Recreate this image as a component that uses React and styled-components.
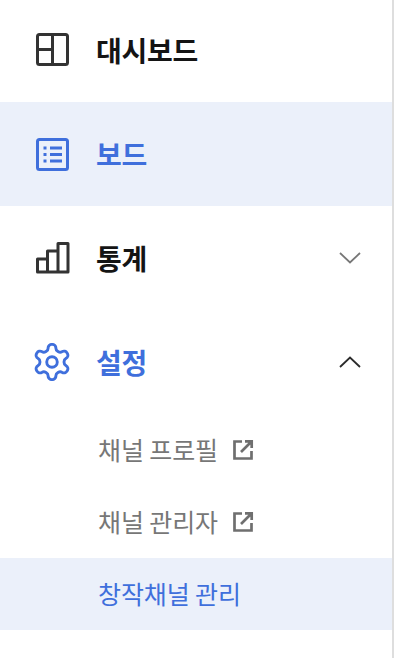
import React from 'react'
import styled, { createGlobalStyle } from 'styled-components';

const GlobalStyle = createGlobalStyle`
  html, body {
    margin: 0;
    padding: 0;
    background: #fff;
    overflow: hidden;
  }
  body {
    font-family: "Noto Sans CJK KR", "Noto Sans", sans-serif;
  }
`;

const Sidebar = styled.nav`
  width: 392px;
  height: 658px;
  border-right: 2px solid #dedede;
  display: flex;
  flex-direction: column;
  background: #fff;
`;

const Menu = styled.a`
  flex: none;
  box-sizing: border-box;
  height: 104px;
  display: flex;
  align-items: center;
  padding: 0 31px 0 33px;
  gap: 25px;
  font-size: 28px;
  line-height: 36px;
  font-weight: 700;
  letter-spacing: -0.3px;
  color: ${p => (p.$active ? '#3f6fdc' : '#141414')};
  background: ${p => (p.$selected ? '#ebf0fa' : 'transparent')};
  &:first-child {
    height: 102px;
    padding-bottom: 2px;
  }
`;

const IconBox = styled.span`
  width: 38px;
  height: 38px;
  flex: none;
  display: flex;
  color: ${p => (p.$active ? '#3f6fdc' : '#333')};
`;

const Label = styled.span`
  flex: 1;
  margin-top: -1px;
`;

const Chevron = styled.svg`
  width: 22px;
  height: 12px;
  fill: none;
  stroke: ${p => (p.$open ? '#2b2b2b' : '#777')};
  stroke-width: 1.8;
`;

const SubMenu = styled.a`
  flex: none;
  box-sizing: border-box;
  height: 72px;
  display: flex;
  align-items: center;
  gap: 14px;
  padding: 0 0 3px 98px;
  font-size: 25px;
  line-height: 32px;
  letter-spacing: -0.1px;
  color: ${p => (p.$active ? '#3f6fdc' : '#777')};
  background: ${p => (p.$active ? '#ebf0fa' : 'transparent')};
`;

const External = styled.svg`
  width: 22px;
  height: 22px;
  flex: none;
  margin-top: 3px;
  fill: none;
  stroke: #6f6f6f;
  stroke-width: 2.7;
`;

const DashboardIcon = () => (
  <svg width="38" height="38" viewBox="0 0 38 38" fill="none" stroke="currentColor" strokeWidth="3">
    <rect x="4.5" y="3.5" width="30" height="30" rx="2" />
    <path d="M19.5 3.5V33.5M4.5 18.5H19.5" />
  </svg>
);

const BoardIcon = () => (
  <svg width="38" height="38" viewBox="0 0 38 38" fill="none" stroke="currentColor" strokeWidth="3">
    <rect x="4.5" y="4.5" width="30" height="30" rx="2" />
    <path d="M10.5 13H13.5M17 13H29M10.5 19.5H13.5M17 19.5H29M10.5 26H13.5M17 26H29" />
  </svg>
);

const StatsIcon = () => (
  <svg width="38" height="38" viewBox="0 0 38 38" fill="none" stroke="currentColor" strokeWidth="3" strokeLinejoin="round">
    <path d="M4.5 33V20H14.5V33ZM14.5 33V12H25V33ZM25 33V4.5H35V33ZM4.5 33H35" />
  </svg>
);

const GearIcon = () => (
  <svg width="38" height="38" viewBox="1.2 1.2 21.6 21.6" fill="none" stroke="currentColor" strokeWidth="1.65" strokeLinejoin="round">
    <path d="M12.22 2h-.44a2 2 0 0 0-2 2v.18a2 2 0 0 1-1 1.73l-.43.25a2 2 0 0 1-2 0l-.15-.08a2 2 0 0 0-2.73.73l-.22.38a2 2 0 0 0 .73 2.73l.15.1a2 2 0 0 1 1 1.72v.51a2 2 0 0 1-1 1.74l-.15.09a2 2 0 0 0-.73 2.73l.22.38a2 2 0 0 0 2.73.73l.15-.08a2 2 0 0 1 2 0l.43.25a2 2 0 0 1 1 1.73V20a2 2 0 0 0 2 2h.44a2 2 0 0 0 2-2v-.18a2 2 0 0 1 1-1.73l.43-.25a2 2 0 0 1 2 0l.15.08a2 2 0 0 0 2.73-.73l.22-.39a2 2 0 0 0-.73-2.73l-.15-.08a2 2 0 0 1-1-1.74v-.5a2 2 0 0 1 1-1.74l.15-.09a2 2 0 0 0 .73-2.73l-.22-.38a2 2 0 0 0-2.73-.73l-.15.08a2 2 0 0 1-2 0l-.43-.25a2 2 0 0 1-1-1.73V4a2 2 0 0 0-2-2z" />
    <circle cx="12" cy="12" r="3" />
  </svg>
);

const ExternalIcon = () => (
  <External viewBox="0 0 22 22">
    <path d="M10 2.5H2.5V19.5H19.5V12" />
    <path d="M9 13 19.5 2.5M13 2.3H19.7V9" />
  </External>
);

const App = () => {
  return (
    <>
      <GlobalStyle />
      <Sidebar>
        <Menu>
          <IconBox><DashboardIcon /></IconBox>
          <Label>대시보드</Label>
        </Menu>
        <Menu $active $selected>
          <IconBox $active><BoardIcon /></IconBox>
          <Label>보드</Label>
        </Menu>
        <Menu>
          <IconBox><StatsIcon /></IconBox>
          <Label>통계</Label>
          <Chevron viewBox="0 0 22 12"><path d="M1 1 11 10.5 21 1" /></Chevron>
        </Menu>
        <Menu $active>
          <IconBox $active><GearIcon /></IconBox>
          <Label>설정</Label>
          <Chevron $open viewBox="0 0 22 12"><path d="M1 11 11 1.5 21 11" /></Chevron>
        </Menu>
        <SubMenu>채널 프로필 <ExternalIcon /></SubMenu>
        <SubMenu>채널 관리자 <ExternalIcon /></SubMenu>
        <SubMenu $active>창작채널 관리</SubMenu>
      </Sidebar>
    </>
  )
}

export default App
